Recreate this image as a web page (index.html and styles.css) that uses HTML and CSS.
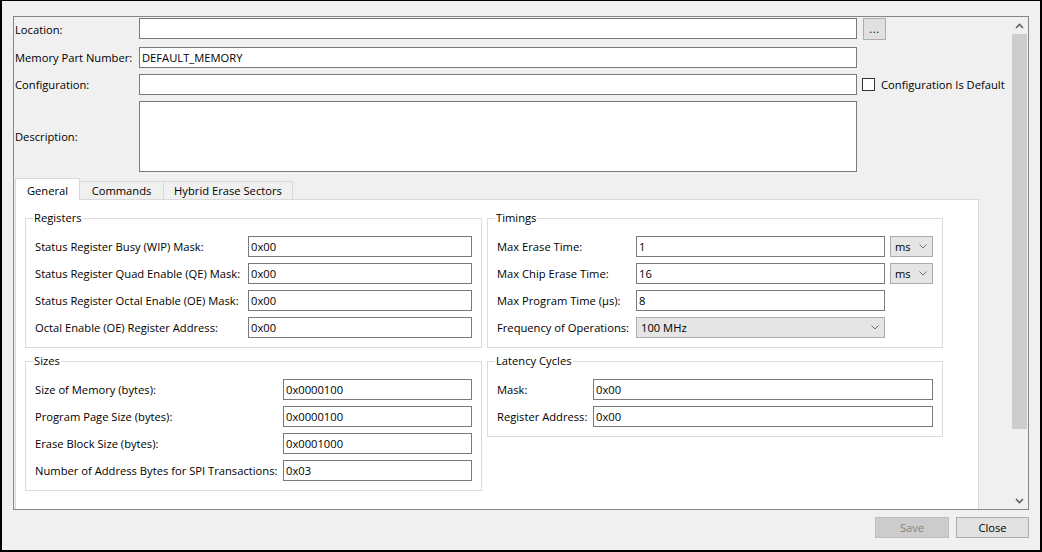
FILE: index.html
```html
<!DOCTYPE html>
<html>
<head>
<meta charset="utf-8">
<link rel="stylesheet" href="styles.css">
</head>
<body>
<div class="window">
  <div class="panel">
    <div class="content">
      <div class="top-grid">
        <div class="lbl">Location:</div>
        <div class="tb"></div>
        <div class="btn-dots">...</div>

        <div class="lbl">Memory Part Number:</div>
        <div class="tb">DEFAULT_MEMORY</div>
        <div></div>

        <div class="lbl">Configuration:</div>
        <div class="tb"></div>
        <div class="chk"><span class="box"></span><span>Configuration Is Default</span></div>

        <div class="lbl">Description:</div>
        <div class="tb tall"></div>
        <div></div>
      </div>

      <div class="tabs">
        <div class="tabstrip">
          <div class="tab selected">General</div>
          <div class="tab tab-cmd">Commands</div>
          <div class="tab tab-hyb">Hybrid Erase Sectors</div>
        </div>
        <div class="tabpage">
          <div class="groups">
            <fieldset class="group g-reg">
              <legend>Registers</legend>
              <div class="lbl">Status Register Busy (WIP) Mask:</div>
              <div class="tb">0x00</div>
              <div class="lbl">Status Register Quad Enable (QE) Mask:</div>
              <div class="tb">0x00</div>
              <div class="lbl">Status Register Octal Enable (OE) Mask:</div>
              <div class="tb">0x00</div>
              <div class="lbl">Octal Enable (OE) Register Address:</div>
              <div class="tb">0x00</div>
            </fieldset>

            <fieldset class="group g-tim">
              <legend>Timings</legend>
              <div class="lbl">Max Erase Time:</div>
              <div class="tb">1</div>
              <div class="dd small"><span>ms</span><svg width="8" height="5" viewBox="0 0 8 5"><polyline points="0.5,0.5 4,4 7.5,0.5" fill="none" stroke="#707070" stroke-width="1"/></svg></div>
              <div class="lbl">Max Chip Erase Time:</div>
              <div class="tb">16</div>
              <div class="dd small"><span>ms</span><svg width="8" height="5" viewBox="0 0 8 5"><polyline points="0.5,0.5 4,4 7.5,0.5" fill="none" stroke="#707070" stroke-width="1"/></svg></div>
              <div class="lbl">Max Program Time (µs):</div>
              <div class="tb">8</div>
              <div></div>
              <div class="lbl">Frequency of Operations:</div>
              <div class="dd"><span>100 MHz</span><svg width="8" height="5" viewBox="0 0 8 5"><polyline points="0.5,0.5 4,4 7.5,0.5" fill="none" stroke="#707070" stroke-width="1"/></svg></div>
              <div></div>
            </fieldset>

            <fieldset class="group g-size">
              <legend>Sizes</legend>
              <div class="lbl">Size of Memory (bytes):</div>
              <div class="tb">0x0000100</div>
              <div class="lbl">Program Page Size (bytes):</div>
              <div class="tb">0x0000100</div>
              <div class="lbl">Erase Block Size (bytes):</div>
              <div class="tb">0x0001000</div>
              <div class="lbl">Number of Address Bytes for SPI Transactions:</div>
              <div class="tb">0x03</div>
            </fieldset>

            <fieldset class="group g-lat">
              <legend>Latency Cycles</legend>
              <div class="lbl">Mask:</div>
              <div class="tb">0x00</div>
              <div class="lbl">Register Address:</div>
              <div class="tb">0x00</div>
            </fieldset>
          </div>
        </div>
      </div>
    </div>
    <div class="vscroll">
      <div class="sb-btn"><svg width="9" height="6" viewBox="0 0 9 6"><polyline points="1,5 4.5,1.5 8,5" fill="none" stroke="#606060" stroke-width="1.6"/></svg></div>
      <div class="thumb"></div>
      <div class="track"></div>
      <div class="sb-btn"><svg width="9" height="6" viewBox="0 0 9 6"><polyline points="1,1 4.5,4.5 8,1" fill="none" stroke="#606060" stroke-width="1.6"/></svg></div>
    </div>
  </div>
  <div class="footer">
    <div class="btn disabled">Save</div>
    <div class="btn">Close</div>
  </div>
</div>
</body>
</html>
```
FILE: styles.css
```css
* { box-sizing: border-box; }
html, body { margin: 0; padding: 0; }
body {
  font-family: "Open Sans", "Noto Sans", sans-serif;
  font-size: 11.2px;
  color: #000;
  background: #f0f0f0;
}
.window {
  width: 1042px;
  height: 552px;
  border-style: solid;
  border-color: #000;
  border-width: 1px 2px 2px 2px;
  background: #f0f0f0;
  display: flex;
  flex-direction: column;
}
.panel {
  margin: 15px 0 0 11px;
  width: 1016px;
  height: 494px;
  border: 1px solid #828790;
  display: flex;
}
.content {
  width: 997px;
  height: 492px;
  overflow: hidden;
}
.top-grid {
  margin-top: 1px;
  display: grid;
  grid-template-columns: 125px 718px 1fr;
  grid-template-rows: 23px 21px 21px 71px;
  row-gap: 6px;
}
.lbl {
  display: flex;
  align-items: center;
  white-space: nowrap;
}
.top-grid .lbl { padding-left: 1px; }
.tb {
  height: 21px;
  border: 1px solid #7a7a7a;
  background: #fff;
  padding-left: 2px;
  line-height: 19px;
  white-space: nowrap;
  overflow: hidden;
}
.tb.tall { height: 71px; }
.btn-dots {
  margin-left: 6px;
  width: 23px;
  height: 22px;
  background: #e1e1e1;
  border: 1px solid #adadad;
  text-align: center;
  line-height: 20px;
  letter-spacing: 0.5px;
}
.chk {
  margin-left: 5px;
  display: flex;
  align-items: center;
  gap: 6px;
  white-space: nowrap;
}
.box {
  width: 13px;
  height: 13px;
  border: 1px solid #333;
  background: #fff;
}
.tabs { margin: 6px 0 0 1px; }
.tabstrip {
  display: flex;
  align-items: flex-end;
  height: 21px;
}
.tab {
  height: 18px;
  border: 1px solid #d9d9d9;
  border-bottom: none;
  background: #f0f0f0;
  text-align: center;
  line-height: 17px;
  white-space: nowrap;
}
.tab.selected {
  width: 65px;
  height: 22px;
  margin-bottom: -1px;
  padding-top: 3px;
  background: #fff;
  position: relative;
  z-index: 1;
}
.tab-cmd { width: 85px; margin-left: -1px; }
.tab-hyb { width: 130px; margin-left: -1px; }
.tabpage {
  width: 964px;
  height: 340px;
  border: 1px solid #d9d9d9;
  background: #fff;
  padding: 11px 0 0 9px;
}
.groups {
  display: grid;
  grid-template-columns: 457px 456px;
  column-gap: 5px;
  row-gap: 6px;
  align-items: start;
}
.group {
  margin: 0;
  min-width: 0;
  border: 1px solid #dcdcdc;
  padding: 11px 9px 9px 9px;
  display: grid;
  grid-auto-rows: 21px;
  row-gap: 6px;
}
.group legend {
  padding: 0 1px;
  margin-left: -2px;
  line-height: 14px;
}
.g-reg { grid-template-columns: 213px 224px; }
.g-size { grid-template-columns: 248px 189px; }
.g-lat { grid-template-columns: 96px 340px; }
.g-tim { grid-template-columns: 139px 249px 48px; }
.g-tim .small { margin-left: 5px; }
.dd {
  height: 21px;
  background: #e5e5e5;
  border: 1px solid #acacac;
  padding: 0 5px 0 4px;
  display: flex;
  align-items: center;
  justify-content: space-between;
  white-space: nowrap;
}
.dd span { line-height: 19px; }
.vscroll {
  width: 17px;
  height: 492px;
  background: #f0f0f0;
  display: flex;
  flex-direction: column;
}
.sb-btn {
  height: 17px;
  display: flex;
  align-items: center;
  justify-content: center;
}
.thumb {
  margin: 0 1px;
  height: 395px;
  background: #cdcdcd;
}
.track { flex: 1; }
.footer {
  display: flex;
  justify-content: flex-end;
  gap: 7px;
  margin-top: 7px;
  padding-right: 11px;
}
.btn {
  width: 73px;
  height: 21px;
  background: #e1e1e1;
  border: 1px solid #adadad;
  text-align: center;
  line-height: 19px;
}
.btn.disabled {
  width: 74px;
  background: #cccccc;
  border-color: #bfbfbf;
  color: #838383;
}
```
